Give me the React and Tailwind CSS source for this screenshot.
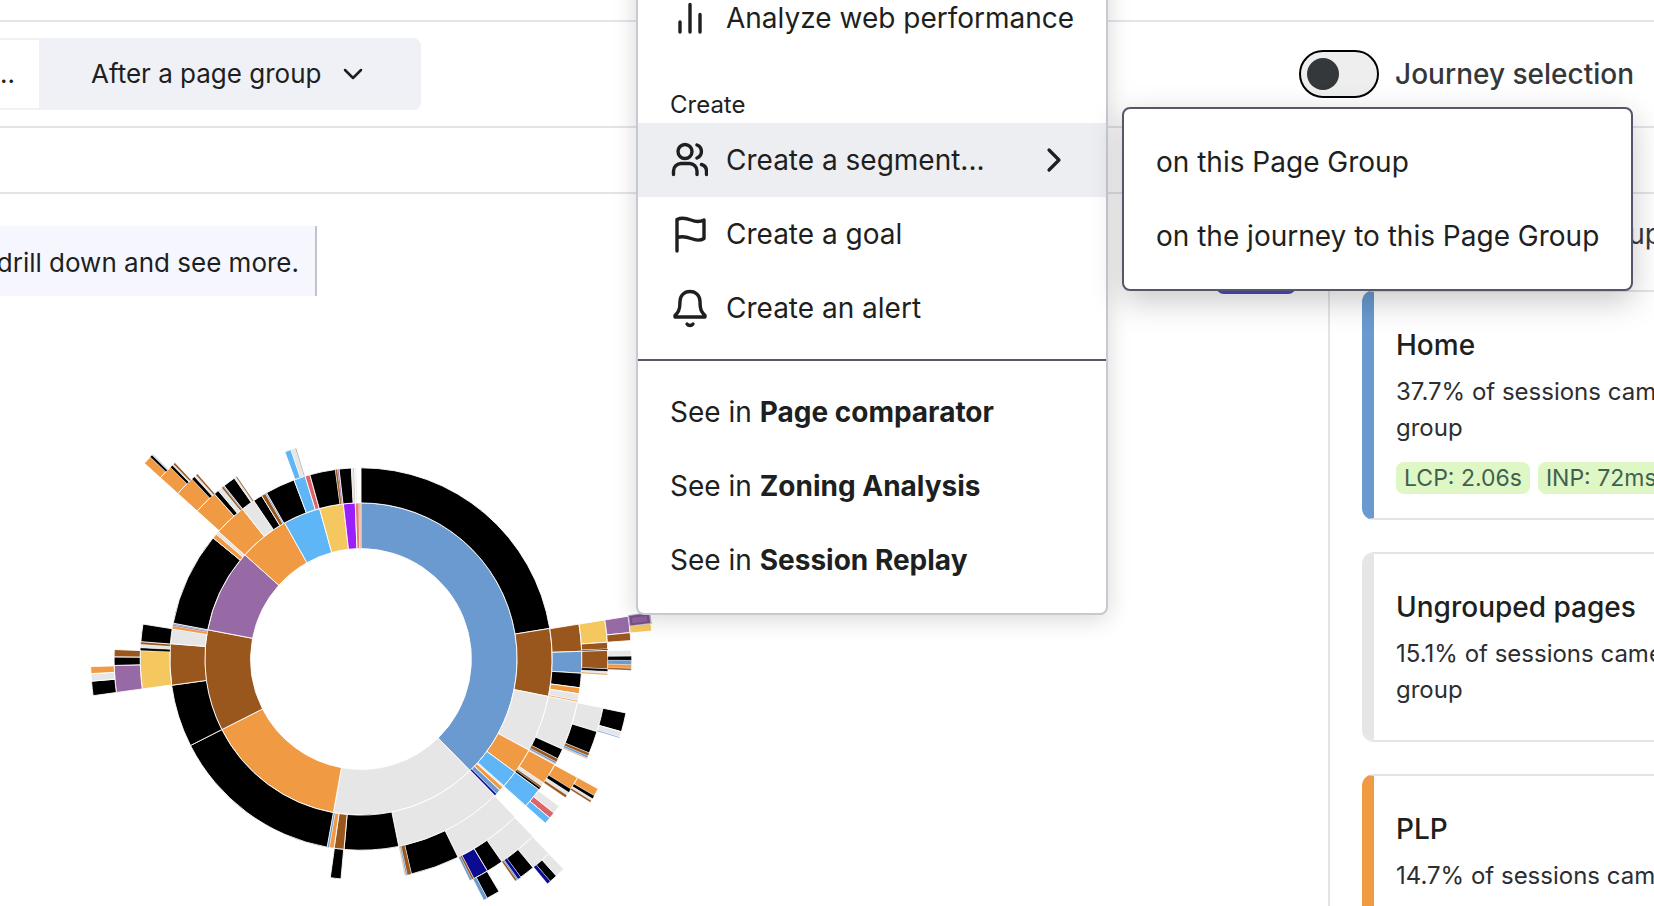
import React from 'react';

const CX = 361;
const CY = 659;
const RADII = [110.4, 110.4, 156.1, 191.2, 220.8, 246.9, 270.4, 292];

const K = '#000000';
const G = '#e6e6e6';
const B = '#6a9ad0';
const O = '#f09a44';
const N = '#9a571d';
const P = '#976aa6';
const S = '#5fb6f6';
const Y = '#f5c75f';
const R = '#e06367';
const V = '#9a1ffb';
const D = '#0a0a92';
const T = '#e8806a';

// Each run: [level, start angle, then pairs of colour and end angle]
const RUNS = [
  [1, 0, B, 135.7, G, 190.2, O, 243.1, N, 280.8, P, 311.9, O, 330.7, S, 344.6, Y, 353.5, V, 357.9, T, 359.3, '#e9a08a', 359.9],
  [2, 0, K, 80.8, N, 101.3, G, 118.5, O, 126.3, S, 131.6, G, 132.1, O, 133.4, B, 134.9, D, 135.6, G, 168.6, K, 185.1, N, 188.1, O, 189.6, B, 190.2, K, 243.1, K, 262.1, N, 274.6, G, 279.1, O, 280, P, 280.4, B, 280.8, K, 309.3, O, 310.8, G, 311.8, O, 321.7, G, 325.9, K, 328.7, N, 330, B, 330.4, K, 339.5, S, 343, R, 344.5, K, 352.3, N, 352.9, P, 353.4, K, 357.1, G, 357.6, '#cdb5a4', 357.9],
  [2, 358.3, '#d8d8d8', 358.5],
  [3, 80.9, N, 88, B, 93.7, K, 97.5, O, 99.1, G, 100.9, O, 101.3, G, 114.1, K, 116.9, N, 117.8, B, 118.3, '#e0b89c', 118.6, O, 124.2, G, 125.2, N, 125.7, K, 126.3, S, 131.7],
  [3, 135.7, G, 153.9, K, 166.8, N, 167.9, B, 168.3, '#e0b89c', 168.6],
  [3, 185.2, K, 188],
  [3, 262.2, Y, 272.2, K, 272.9, G, 273.8, N, 274.5, K, 279.1],
  [3, 312.1, O, 318.4, K, 319.7, G, 320.9, N, 321.4, B, 321.7, K, 325, G, 325.5, N, 325.8],
  [3, 339.8, S, 341.5, G, 342.7, '#8a8a8a', 342.9],
  [4, 80.9, Y, 86.1, N, 87.7, K, 88, N, 92.3, K, 92.9, G, 93.4, O, 93.7],
  [4, 101.4, G, 107.1, K, 112.4, N, 113.1, B, 113.6, '#e0b89c', 113.9],
  [4, 118.7, O, 121.8, K, 122.7, G, 123.5, N, 124.1],
  [4, 126.6, G, 128.6, R, 130.1, S, 131.7],
  [4, 135.9, G, 145.2, K, 149.2, D, 152.8, N, 153.3, B, 153.8],
  [4, 262.2, P, 268.5, K, 270.5, N, 272.2],
  [4, 312.1, O, 316.8, K, 317.6, G, 318.1, N, 318.5],
  [5, 80.9, P, 84.4, N, 86.1],
  [5, 88.1, G, 89.4, K, 90.3, B, 91.2, O, 92, N, 92.4],
  [5, 101.5, K, 105.6, G, 106.8, B, 107],
  [5, 118.7, O, 120.4, K, 121.1, G, 121.6, N, 122],
  [5, 136, G, 140.5, K, 143.8, D, 144.5, B, 144.8, N, 145.2],
  [5, 149.3, K, 152.2, B, 153],
  [5, 262.2, K, 265.3, G, 266.9, O, 268.4],
  [5, 312.1, O, 315.2, K, 315.8, G, 316.1, N, 316.5],
  [6, 83, Y, 84.5],
  [6, 136, G, 138, K, 139.6, D, 140.3],
  [6, 312.1, O, 313.8, K, 314.3, '#c9d6e8', 314.6],
];

function point(r, deg) {
  const a = (deg * Math.PI) / 180;
  return `${(CX + r * Math.sin(a)).toFixed(2)} ${(CY - r * Math.cos(a)).toFixed(2)}`;
}

function arc(r0, r1, a0, a1) {
  const large = a1 - a0 > 180 ? 1 : 0;
  return `M${point(r1, a0)}A${r1} ${r1} 0 ${large} 1 ${point(r1, a1)}L${point(r0, a1)}A${r0} ${r0} 0 ${large} 0 ${point(r0, a0)}Z`;
}

const SEGMENTS = RUNS.flatMap(([level, start, ...rest]) => {
  const out = [];
  let from = start;
  for (let i = 0; i < rest.length; i += 2) {
    out.push({ color: rest[i], thin: rest[i + 1] - from < 1.2, d: arc(RADII[level], RADII[level + 1], from, rest[i + 1]) });
    from = rest[i + 1];
  }
  return out;
});

function Sunburst() {
  return (
    <svg width="660" height="906" viewBox="0 0 660 906" role="img" aria-label="Journeys" className="absolute left-0 top-0">
      {SEGMENTS.map((s, i) => (
        <path key={i} d={s.d} fill={s.color} stroke="#fff" strokeWidth={s.thin ? 0.25 : 0.9} />
      ))}
      <path d={arc(270.4, 293, 80.7, 83.1)} fill="#bdb9c4" />
      <path d={arc(271.4, 291.5, 80.9, 82.9)} fill="#7c508b" />
      <path d={arc(274, 289, 81.4, 82.5)} fill="#9163a0" />
    </svg>
  );
}

const stroke = { fill: 'none', stroke: 'currentColor', strokeWidth: 4, strokeLinecap: 'round', strokeLinejoin: 'round' };

function Icon({ children }) {
  return (
    <svg width="40" height="40" viewBox="-1 0 40 40" className="-mx-0.5 shrink-0" aria-hidden="true" {...stroke} strokeWidth="3.400">
      {children}
    </svg>
  );
}

const BarsIcon = () => (
  <Icon>
    <path d="M11 34V24M21 34V6.500M31 34V16.500" />
  </Icon>
);
const UsersIcon = () => (
  <Icon>
    <circle cx="16" cy="11.500" r="7" />
    <path d="M4.500 34.500V31a7.500 7.500 0 0 1 7.500-7.500H20.500a7.500 7.500 0 0 1 7.500 7.500v3.500M28 5a7 7 0 0 1 0 13M32.500 24.500a7 7 0 0 1 5 6.500v3.500" />
  </Icon>
);
const FlagIcon = () => (
  <Icon>
    <path d="M8 37V5.500c5-2.500 9-1.500 14 .5s9 2 13 0V24.500c-4 2.500-8 2-13 0s-9-2.500-14-1" />
  </Icon>
);
const BellIcon = () => (
  <Icon>
    <path d="M21 3.500c-6 0-10 4.500-10 10 0 9-2 11-5 14V29H36V27.500c-3-3-5-5-5-14 0-5.500-4-10-10-10ZM18 36c1.500 2 4.500 2 6 0" />
  </Icon>
);

function MenuItem({ icon, children, active, ...rest }) {
  return (
    <button
      type="button"
      role="menuitem"
      className={`flex h-[74px] w-full items-center gap-5 px-8 text-left whitespace-nowrap ${active ? 'bg-[#edeef1]' : ''}`}
      {...rest}
    >
      {icon}
      {children}
    </button>
  );
}

function ContextMenu() {
  return (
    <div role="menu" className="absolute left-[636px] -top-[37px] w-[472px] rounded-lg border-2 border-[#c5c9d0] bg-white pt-4 pb-4 shadow-[0_4px_24px_rgba(0,0,0,0.16)]">
      <MenuItem icon={<BarsIcon />}>Analyze web performance</MenuItem>
      <div className="px-8 pt-8 text-2xl leading-9">Create</div>
      <MenuItem icon={<UsersIcon />} active aria-haspopup="menu" aria-expanded="true">
        <span className="flex-1">Create a segment...</span>
        <svg width="24" height="28" viewBox="0 0 24 28" className="mr-2" aria-hidden="true" {...stroke} strokeWidth="3.200">
          <path d="M7 4l10 10L7 24" />
        </svg>
      </MenuItem>
      <MenuItem icon={<FlagIcon />}>Create a goal</MenuItem>
      <MenuItem icon={<BellIcon />}>Create an alert</MenuItem>
      <hr className="my-3.5 border-0 border-t-2 border-[#55576b]" />
      {['Page comparator', 'Zoning Analysis', 'Session Replay'].map((name) => (
        <MenuItem key={name}>
          <span>
            See in <b className="font-bold">{name}</b>
          </span>
        </MenuItem>
      ))}
    </div>
  );
}

function SubMenu() {
  return (
    <div role="menu" className="absolute right-[21px] top-[107px] w-[511px] rounded-lg border-2 border-[#55566b] bg-white py-4 shadow-[0_10px_32px_rgba(0,0,0,0.22)]">
      <MenuItem>on this Page Group</MenuItem>
      <MenuItem>on the journey to this Page Group</MenuItem>
    </div>
  );
}

function Card({ title, share, accent, tags }) {
  return (
    <article className={`rounded-l-xl border-y-2 border-l-12 border-y-[#e3e3ea] pt-[33px] pb-6 pl-[22px] ${accent}`}>
      <h2 className="text-[28px] leading-10 font-medium">{title}</h2>
      <p className="pt-[9px] text-2xl leading-9 whitespace-nowrap text-[#2c2e31]">
        {share} of sessions came after this page
        <br />
        group
      </p>
      {tags ? (
        <div className="flex gap-2 pt-4">
          {tags.map((t) => (
            <span key={t} className="rounded-lg bg-[#def7c4] px-2 text-[23px] leading-8 whitespace-nowrap text-[#3f6152]">
              {t}
            </span>
          ))}
        </div>
      ) : (
        <div className="h-2" />
      )}
    </article>
  );
}

export default function App() {
  return (
    <div className="relative flex h-screen flex-col overflow-hidden bg-white font-['Inter',sans-serif] text-[28px] leading-9 text-[#1d1f21]">
      <div className="h-[22px] shrink-0 border-b-2 border-[#e3e3ea]" />
      <header className="flex h-[106px] shrink-0 items-center justify-between border-b-2 border-[#e3e3ea] pr-5">
        <div className="flex h-[72px] overflow-hidden rounded-r-lg text-[26px]">
          <button type="button" className="flex w-[39px] items-center justify-end border-y-2 border-[#f0f1f6] bg-white pr-6">
            ...
          </button>
          <button type="button" className="flex w-[382px] items-center gap-5 bg-[#f0f1f6] pl-[52px] whitespace-nowrap">
            After a page group
            <svg width="24" height="24" viewBox="0 0 24 24" aria-hidden="true" {...stroke} strokeWidth="2.500">
              <path d="M4 8l8 8 8-8" />
            </svg>
          </button>
        </div>
        <label className="flex items-center gap-4 font-medium text-[#35383b]">
          <input type="checkbox" role="switch" className="peer sr-only" />
          <span className="flex h-12 w-20 items-center rounded-full border-2 border-black bg-[#eeeeee] px-1.5">
            <span className="size-8 rounded-full bg-[#35383b]" />
          </span>
          Journey selection
        </label>
      </header>
      <div className="h-[66px] shrink-0 border-b-2 border-[#e3e3ea]" />
      <main className="flex min-h-0 flex-1">
        <section className="flex flex-1 items-start justify-between pt-8">
          <div className="flex h-[70px] w-[317px] items-center justify-end overflow-hidden border-r-2 border-[#c3c3d0] bg-[#f6f6ff] pt-1 pr-4 text-[26px] whitespace-nowrap">
            <p>Click on a segment to drill down and see more.</p>
          </div>
          <button type="button" aria-label="Export" className="mr-8 h-[68px] w-[80px] rounded-lg bg-[#5046c8]" />
        </section>
        <aside className="flex w-[326px] flex-col gap-8 overflow-hidden border-l-2 border-[#e3e3ea] pl-8">
          <div className="-mb-8 flex h-24 shrink-0 items-start justify-end pt-[22px] text-[#35383b]">
            <h1 className="-mr-2 whitespace-nowrap">Page group</h1>
          </div>
          <Card
            title="Home"
            share="37.7%"
            accent="border-l-[#6a9ad0]"
            tags={['LCP: 2.06s', 'INP: 72ms']}
          />
          <Card title="Ungrouped pages" share="15.1%" accent="border-l-[#e6e6e6]" />
          <Card title="PLP" share="14.7%" accent="border-l-[#f09a44]" />
        </aside>
      </main>
      <Sunburst />
      <ContextMenu />
      <SubMenu />
    </div>
  );
}
